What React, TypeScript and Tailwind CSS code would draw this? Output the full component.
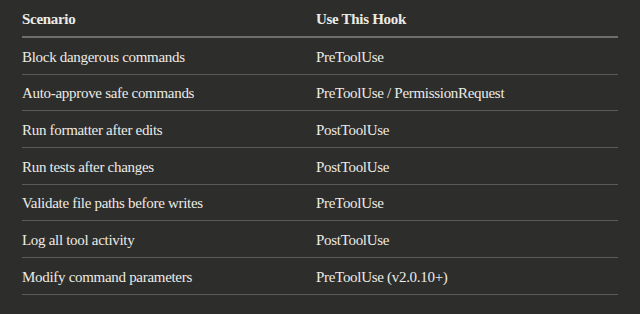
const ROWS: [string, string][] = [
  ['Block dangerous commands', 'PreToolUse'],
  ['Auto-approve safe commands', 'PreToolUse / PermissionRequest'],
  ['Run formatter after edits', 'PostToolUse'],
  ['Run tests after changes', 'PostToolUse'],
  ['Validate file paths before writes', 'PreToolUse'],
  ['Log all tool activity', 'PostToolUse'],
  ['Modify command parameters', 'PreToolUse (v2.0.10+)'],
];

export default function App() {
  return (
    <div className="w-[640px] h-[314px] bg-[#2d2d2b] text-[#ecebe6] font-['Liberation_Serif',serif] text-[15px] tracking-[-0.3px] overflow-hidden">
      <div className="ml-[22px] w-[596px]">
        <div className="flex items-center h-[38px] pt-[2px] border-b-2 border-[#6e6e6c] font-bold">
          <div className="w-[294px]">Scenario</div>
          <div>Use This Hook</div>
        </div>
        {ROWS.map(([scenario, hook]) => (
          <div key={scenario} className="flex items-center h-[36.67px] pt-[2px] border-b border-[#5a5a58]">
            <div className="w-[294px]">{scenario}</div>
            <div>{hook}</div>
          </div>
        ))}
      </div>
    </div>
  );
}
